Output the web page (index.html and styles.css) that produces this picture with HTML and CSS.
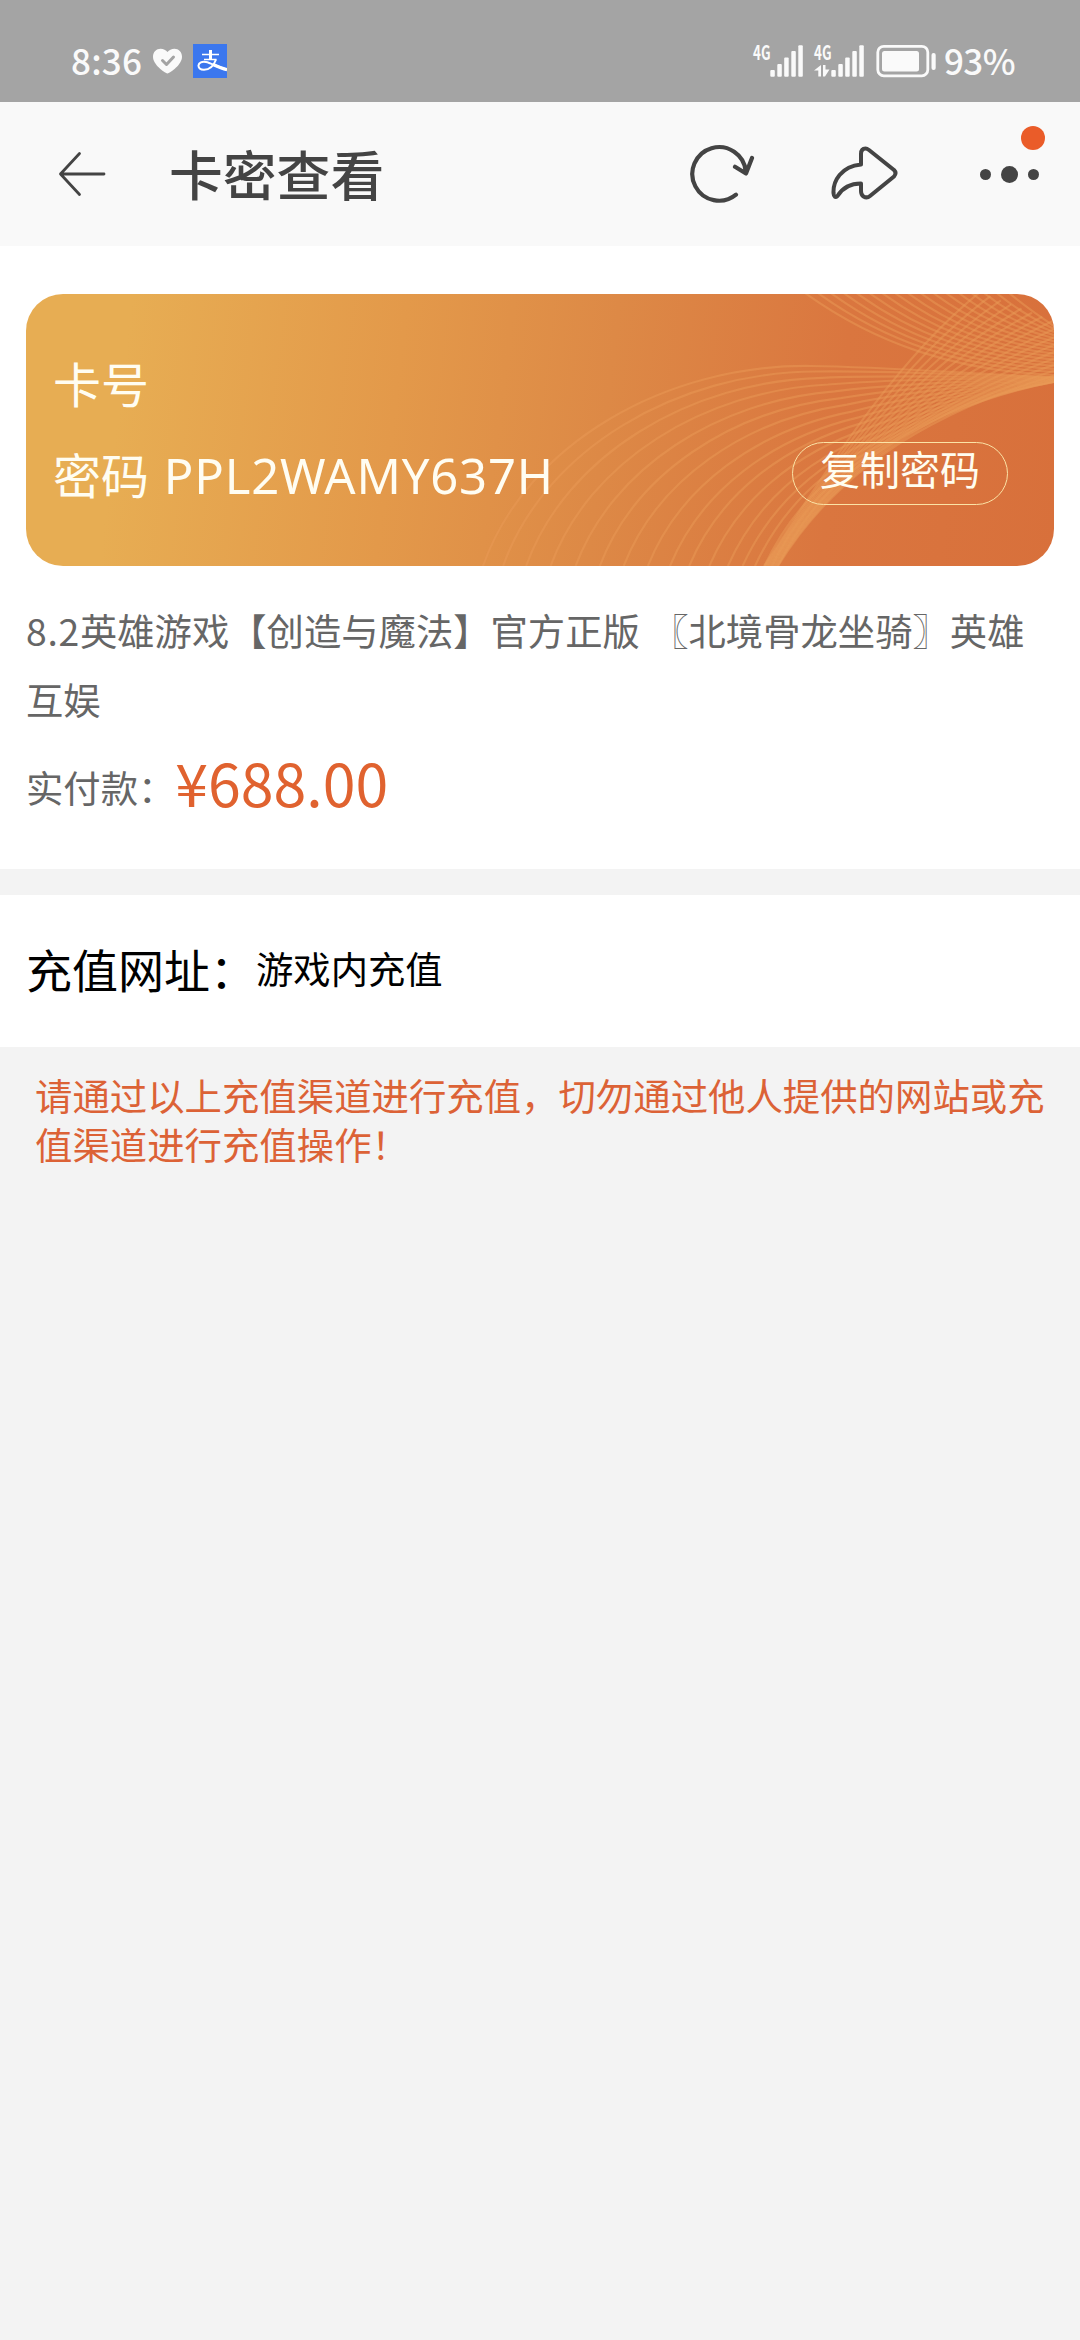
FILE: index.html
```html
<!DOCTYPE html>
<html lang="zh-CN">
<head>
<meta charset="utf-8">
<title>卡密查看</title>
<link rel="stylesheet" href="styles.css">
</head>
<body>
<header class="status">
  <div class="status-left">
    <span class="clock">8:36</span>
    <svg class="heart" viewBox="0 0 31 26" width="31" height="26"><path d="M15.5 25.5C12 24.500 1 16.500 1 8.800C1 4 4.500.8 8.500.8C11.500.8 14 2.200 15.500 4C17 2.200 19.500.8 22.500.8C26.500.8 30 4 30 8.800C30 16.500 19 24.500 15.500 25.500Z" fill="#fafafa"/><path d="M10.500 12.500L14.500 16.500L21.500 9" fill="none" stroke="#a4a4a4" stroke-width="3" stroke-linecap="round" stroke-linejoin="round"/></svg>
    <svg class="pay" viewBox="0 0 34 34" width="34" height="34"><rect width="34" height="34" fill="#3b77ee"/><g fill="none" stroke="#fff"><path d="M9 10.500H26M11 15.500H23.500" stroke-width="1.600"/><path d="M17.500 6V15.500" stroke-width="3"/><path d="M23 15.500C21 21 17 25.800 11 25.800C7 25.800 5.300 23.600 5.500 21.300C5.800 18.500 9 17.200 13 18C18 19 26 23.800 34 25.500" stroke-width="2"/><path d="M20 20.500C25 22.800 29 24.500 34 25.700" stroke-width="3.200"/></g></svg>
  </div>
  <div class="status-right">
    <svg class="net" viewBox="0 0 51 34" width="51" height="34"><text x="0" y="15.500" class="net-label" textLength="17.500" lengthAdjust="spacingAndGlyphs">4G</text><g fill="#fafafa"><rect x="17.300" y="26" width="4.500" height="6.700" rx="1"/><rect x="24.300" y="20" width="4.500" height="12.700" rx="1"/><rect x="31.200" y="13.500" width="4.500" height="19.200" rx="1"/><rect x="38.300" y="7" width="4.500" height="25.700" rx="1"/><rect x="45.300" y="1.300" width="4.500" height="31.400" rx="1"/></g></svg>
    <svg class="net net-two" viewBox="0 0 51 34" width="51" height="34"><text x="0" y="15.500" class="net-label" textLength="17.500" lengthAdjust="spacingAndGlyphs">4G</text><g fill="#fafafa"><rect x="17.300" y="26" width="4.500" height="6.700" rx="1"/><rect x="24.300" y="20" width="4.500" height="12.700" rx="1"/><rect x="31.200" y="13.500" width="4.500" height="19.200" rx="1"/><rect x="38.300" y="7" width="4.500" height="25.700" rx="1"/><rect x="45.300" y="1.300" width="4.500" height="31.400" rx="1"/><path d="M7 21V32.500H4.300V26.500H0ZM9 21H11.500V25.500H15.500L11 32.500H9Z"/></g></svg>
    <svg class="battery" viewBox="0 0 61 34" width="61" height="34"><rect x="1.800" y="2.300" width="50" height="29.500" rx="6" fill="none" stroke="#fafafa" stroke-width="2.800"/><rect x="6" y="7" width="37" height="20.500" rx="2.500" fill="#fafafa"/><rect x="55.500" y="9" width="4.200" height="17" rx="2" fill="#fafafa"/></svg>
    <span class="percent">93%</span>
  </div>
</header>

<nav class="bar">
  <svg class="back" viewBox="0 0 48 46" width="48" height="46"><path d="M21.500 2.500L2.500 23L21.500 43.500M2.500 23H46" fill="none" stroke="#444" stroke-width="2.800" stroke-linecap="round" stroke-linejoin="round"/></svg>
  <h1 class="title">卡密查看</h1>
  <svg class="refresh" viewBox="0 0 66 60" width="66" height="60"><path d="M47 50.700A26.800 26.800 0 1 1 56.800 27.500M46 22.800L57 29.500L63 14" fill="none" stroke="#444" stroke-width="4.200" stroke-linecap="round" stroke-linejoin="round"/></svg>
  <svg class="share" viewBox="0 0 68 56" width="68" height="56"><path d="M31 18.500V8Q31 2.500 35.500 2.500Q37 2.500 39 4L64 24Q67 27 64 30.500L40 50Q37 52.500 33.500 50.500Q31 49 31 45V37.500C21 37.500 13 41 7.500 50Q4 53 3.500 47C3 35 11 20.500 31 18.500Z" fill="none" stroke="#444" stroke-width="4" stroke-linejoin="round"/></svg>
  <div class="more">
    <i class="dot"></i><i class="dot dot-big"></i><i class="dot"></i>
    <i class="badge"></i>
  </div>
</nav>

<main>
  <section class="panel order">
    <div class="card">
      <svg class="waves" viewBox="0 0 1028 272" width="1028" height="272"></svg>
      <div class="card-row">卡号</div>
      <div class="card-row"><span>密码 <span class="code">PPL2WAMY637H</span></span><button class="copy">复制密码</button></div>
    </div>
    <p class="goods"><span class="date">8.2</span>英雄游戏【创造与魔法】官方正版 〖北境骨龙坐骑〗英雄互娱</p>
    <div class="paid"><span>实付款：</span><strong class="price">¥688.00</strong></div>
  </section>
  <section class="panel site"><span class="site-label">充值网址：</span><span class="site-value">游戏内充值</span></section>
  <p class="notice">请通过以上充值渠道进行充值，切勿通过他人提供的网站或充值渠道进行充值操作！</p>
</main>
<script src="waves.js"></script>
</body>
</html>
```
FILE: styles.css
```css
* { box-sizing: border-box; }
body {
  margin: 0;
  min-height: 2340px;
  background: #f3f3f3;
  font-family: "Noto Sans CJK SC", "Noto Sans", sans-serif;
  color: #000;
}
h1, p { margin: 0; font-weight: 400; }
svg { display: block; flex: none; }

.status {
  display: flex;
  justify-content: space-between;
  height: 102px;
  padding: 44px 66px 0 70px;
  background: #a4a4a4;
  color: #fafafa;
}
.status-left, .status-right { display: flex; height: 34px; align-items: center; }
.clock, .percent { padding-bottom: 3px; font-size: 35px; line-height: 34px; font-weight: 500; white-space: nowrap; }
.clock { width: 82px; padding-left: 1px; letter-spacing: 0.2px; }
.pay { margin-left: 10px; }
.net { overflow: visible; }
.net-label { font-size: 19.5px; font-weight: 700; fill: #fafafa; }
.net-two { margin-left: 10px; }
.battery { margin-left: 11px; }
.percent { width: 70px; margin-left: 7px; letter-spacing: -0.6px; }

.bar {
  display: flex;
  align-items: center;
  height: 144px;
  padding-left: 58px;
  background: #f9f9f9;
}
.title {
  width: 520px;
  margin-left: 63px;
  padding-bottom: 3px;
  font-size: 53.8px;
  line-height: 72px;
  font-weight: 500;
  color: #444;
}
.share { margin-left: 75px; }
.more {
  position: relative;
  display: flex;
  align-items: center;
  justify-content: space-between;
  width: 59px;
  margin-left: 82px;
}
.dot { width: 11px; height: 11px; border-radius: 50%; background: #444; }
.dot-big { width: 17px; height: 17px; }
.badge {
  position: absolute;
  top: -40px;
  right: -6px;
  width: 24px;
  height: 24px;
  border-radius: 50%;
  background: #ea5c29;
}

.panel { background: #fff; }
.order { height: 623px; padding: 48px 26px 0; }
.card {
  position: relative;
  height: 272px;
  padding: 43px 46px 0 27px;
  border-radius: 37px;
  overflow: hidden;
  background: linear-gradient(97deg, #e7ad53 10%, #e3994a 36%, #dd8946 56%, #da763f 78%, #d8703b 100%);
  color: #fffdf2;
}
.waves { position: absolute; inset: 0; fill: none; stroke: #ea9a56; stroke-opacity: .5; stroke-width: 2.2; }
.card-row {
  position: relative;
  display: flex;
  align-items: center;
  justify-content: space-between;
  height: 91px;
  font-size: 48px;
  line-height: 60px;
  white-space: nowrap;
}
.card-row:first-of-type { padding-bottom: 2px; }
.card-row > span { padding-bottom: 2px; }
.code { margin-left: 4px; font-family: "Noto Sans", sans-serif; font-size: 49px; line-height: 1; letter-spacing: 0.8px; }
.copy {
  width: 216px;
  height: 63px;
  padding: 0 0 11px;
  border: 1.5px solid #fbe3a6;
  border-radius: 32px;
  background: none;
  font: inherit;
  font-size: 40px;
  line-height: 50px;
  color: #fffdf0;
}
.goods { margin-top: 30px; font-size: 37.33px; line-height: 68.5px; word-spacing: 3px; color: #666; }
.date { letter-spacing: 0.7px; }
.paid { display: flex; align-items: center; height: 108px; font-size: 37.33px; color: #666; }
.price { padding-bottom: 11px; font-size: 59px; font-weight: 400; line-height: 80px; color: #e0622f; }

.site {
  display: flex;
  align-items: center;
  height: 152px;
  margin-top: 26px;
  padding: 0 26px 7px;
}
.site-label { font-size: 46px; }
.site-value { font-size: 37.33px; }
.notice { padding: 24px 35px 0; font-size: 37.4px; line-height: 48.7px; color: #dc6236; }
```
FILE: waves.js
```js
// Decorative ribbons on the card: each one blends a first curve into a last curve.
const svg = document.querySelector('.waves');
function ribbon(first, last, steps) {
  for (const t of steps) {
    const p = first.map((v, i) => (v + (last[i] - v) * t).toFixed(1));
    const path = document.createElementNS('http://www.w3.org/2000/svg', 'path');
    path.setAttribute('d', `M${p.slice(0, 2)} C${p.slice(2)}`);
    svg.appendChild(path);
  }
}
const even = n => Array.from({ length: n }, (_, i) => i / (n - 1));
ribbon(
  [457, 272, 500, 150, 640, 70, 785, 72, 860, 73, 950, 80, 1028, 83],
  [752, 272, 775, 225, 805, 187, 860, 153, 905, 125, 960, 101, 1028, 88],
  [0, .068, .146, .229, .314, .396, .477, .559, .634, .699, .767, .83, .88, .922, .954, .98, 1]
);
ribbon([738, 272, 795, 185, 865, 70, 954, -2], [752, 272, 830, 145, 960, 95, 1110, 60], even(16));
ribbon([779, -1, 850, 50, 930, 77, 1028, 81], [975, -8, 995, 10, 1010, 20, 1028, 32], even(17));
```
